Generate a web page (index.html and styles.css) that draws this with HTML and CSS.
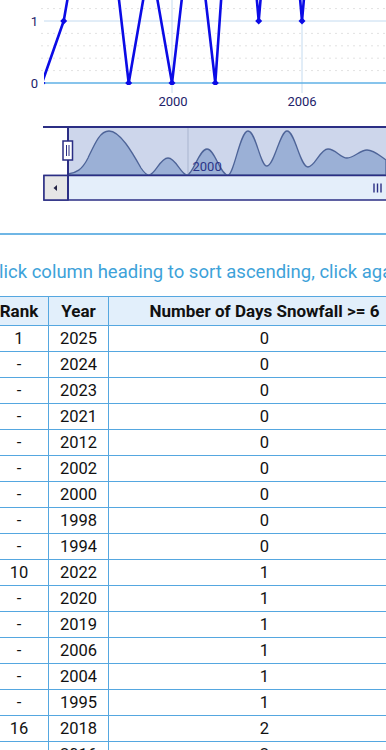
FILE: index.html
```html
<!DOCTYPE html>
<html>
<head>
<meta charset="utf-8">
<link rel="stylesheet" href="styles.css">
</head>
<body>
<svg class="chart" width="386" height="233" viewBox="0 0 386 233">
  <defs>
    <clipPath id="plot"><rect x="44" y="-300" width="342" height="385"/></clipPath>
  </defs>
  <g class="minor">
    <line x1="41" y1="8.6" x2="386" y2="8.6"/>
    <line x1="41" y1="33.4" x2="386" y2="33.4"/>
    <line x1="41" y1="45.8" x2="386" y2="45.8"/>
    <line x1="41" y1="58.2" x2="386" y2="58.2"/>
    <line x1="41" y1="70.6" x2="386" y2="70.6"/>
  </g>
  <line class="grid" x1="44" y1="21" x2="386" y2="21"/>
  <line class="grid" x1="172" y1="0" x2="172" y2="93"/>
  <line class="grid" x1="302" y1="0" x2="302" y2="93"/>
  <line class="base" x1="44" y1="83" x2="386" y2="83"/>
  <text class="lbl" x="38" y="25.5" text-anchor="end">1</text>
  <text class="lbl" x="38" y="87.5" text-anchor="end">0</text>
  <text class="lbl" x="173" y="106" text-anchor="middle">2000</text>
  <text class="lbl" x="302" y="106" text-anchor="middle">2006</text>
  <g clip-path="url(#plot)">
    <polyline class="series" points="42,83 63.7,21 85.3,-103 107,-103 128.7,83 150.3,-41 172,83 193.7,-103 215.3,83 237,-227 258.7,21 280.3,-227 302,21 323.7,-227 345.3,-103 367,-165 388.7,-103"/>
    <g class="mk">
      <path d="M42,79.5 L45.5,83 L42,86.5 L38.5,83 Z"/>
      <path d="M63.7,17.5 L67.2,21 L63.7,24.5 L60.2,21 Z"/>
      <path d="M128.7,79.5 L132.2,83 L128.7,86.5 L125.2,83 Z"/>
      <path d="M172,79.5 L175.5,83 L172,86.5 L168.5,83 Z"/>
      <path d="M215.3,79.5 L218.8,83 L215.3,86.5 L211.8,83 Z"/>
      <path d="M258.7,17.5 L262.2,21 L258.7,24.5 L255.2,21 Z"/>
      <path d="M302,17.5 L305.5,21 L302,24.5 L298.5,21 Z"/>
    </g>
  </g>
  <rect class="mask" x="69" y="128" width="317" height="47"/>
  <line class="navgrid" x1="188" y1="127" x2="188" y2="175"/>
  <path class="area" d="M68,174 C76,173 82,170 88,158 C95,143 100,131 109,131 C120,131 132,152 141,168 C145,174 147,175 149,175 C155,175 160,158 168,158 C176,158 181,175 187,175 C193,175 199,149 207,149 C215,149 220,175 228,175 C234,175 240,131 248,131 C256,131 260,166 267,166 C274,166 280,131 287,131 C295,131 300,167 308,167 C315,167 320,149 328,149 C336,149 340,158 347,158 C354,158 360,150 367,150 C374,150 380,156 386,160 L386,175 L68,175 Z"/>
  <text class="navlbl" x="192.5" y="171">2000</text>
  <line class="outline" x1="43" y1="127" x2="386" y2="127"/>
  <rect class="track" x="44" y="175.5" width="350" height="24.5"/>
  <rect class="btn" x="44" y="175.5" width="24" height="24.5"/>
  <path class="arrow" d="M53.5,188 L57,185 L57,191 Z"/>
  <g class="grip">
    <line x1="374" y1="183.5" x2="374" y2="192.5"/>
    <line x1="377.5" y1="183.5" x2="377.5" y2="192.5"/>
    <line x1="381" y1="183.5" x2="381" y2="192.5"/>
  </g>
  <line class="outline" x1="68" y1="127" x2="68" y2="200"/>
  <rect class="handle" x="63" y="141" width="9.5" height="19"/>
  <line class="hline" x1="66.5" y1="145" x2="66.5" y2="156"/>
  <line class="hline" x1="69" y1="145" x2="69" y2="156"/>
</svg>
<div class="divider"></div>
<div class="content">
  <p class="hint">Click column heading to sort ascending, click again to sort descending</p>
  <table class="rank-table">
    <thead>
      <tr><th class="c-rank">Rank</th><th class="c-year">Year</th><th class="c-num">Number of Days Snowfall &gt;= 6</th></tr>
    </thead>
    <tbody>
      <tr><td>1</td><td>2025</td><td>0</td></tr>
      <tr><td>-</td><td>2024</td><td>0</td></tr>
      <tr><td>-</td><td>2023</td><td>0</td></tr>
      <tr><td>-</td><td>2021</td><td>0</td></tr>
      <tr><td>-</td><td>2012</td><td>0</td></tr>
      <tr><td>-</td><td>2002</td><td>0</td></tr>
      <tr><td>-</td><td>2000</td><td>0</td></tr>
      <tr><td>-</td><td>1998</td><td>0</td></tr>
      <tr><td>-</td><td>1994</td><td>0</td></tr>
      <tr><td>10</td><td>2022</td><td>1</td></tr>
      <tr><td>-</td><td>2020</td><td>1</td></tr>
      <tr><td>-</td><td>2019</td><td>1</td></tr>
      <tr><td>-</td><td>2006</td><td>1</td></tr>
      <tr><td>-</td><td>2004</td><td>1</td></tr>
      <tr><td>-</td><td>1995</td><td>1</td></tr>
      <tr><td>16</td><td>2018</td><td>2</td></tr>
      <tr><td>-</td><td>2016</td><td>2</td></tr>
      <tr><td>-</td><td>2015</td><td>2</td></tr>
    </tbody>
  </table>
</div>
</body>
</html>
```
FILE: styles.css
```css
html, body {
  margin: 0;
  padding: 0;
  background: #ffffff;
  overflow: hidden;
  width: 386px;
  height: 750px;
}
body {
  font-family: Roboto, "Liberation Sans", sans-serif;
  color: #111111;
}
.chart {
  display: block;
}
.minor line {
  stroke: #e2e2e2;
  stroke-width: 1;
  stroke-dasharray: 2 4;
}
.grid {
  stroke: #c4dbf0;
  stroke-width: 1;
}
.base {
  stroke: #5fb0e6;
  stroke-width: 1.5;
}
.lbl {
  font-family: Roboto, "Liberation Sans", sans-serif;
  font-size: 13px;
  fill: #22226a;
}
.series {
  fill: none;
  stroke: #0b0be6;
  stroke-width: 2.6;
  stroke-linejoin: round;
}
.mk path {
  fill: #0b0be6;
}
.mask {
  fill: #cdd6eb;
}
.navgrid {
  stroke: #a9b5cf;
  stroke-width: 1;
}
.area {
  fill: #9bb0d6;
  stroke: #4e6498;
  stroke-width: 1.3;
}
.navlbl {
  font-family: Roboto, "Liberation Sans", sans-serif;
  font-size: 13px;
  fill: #2c3588;
}
.outline {
  stroke: #2b2e84;
  stroke-width: 2;
}
.track {
  fill: #e4eefa;
  stroke: #2b2e84;
  stroke-width: 1.5;
}
.btn {
  fill: #e6e6e6;
  stroke: #2b2e84;
  stroke-width: 1.5;
}
.arrow {
  fill: #222244;
}
.grip line {
  stroke: #2b2e84;
  stroke-width: 1.4;
}
.handle {
  fill: #ffffff;
  stroke: #2b2e84;
  stroke-width: 1.5;
}
.hline {
  stroke: #2b2e84;
  stroke-width: 1;
}
.divider {
  height: 0;
  border-top: 2px solid #6fb6e5;
}
.content {
  margin-left: -11px;
  width: 440px;
}
.hint {
  margin: 25px 0 12px -2px;
  font-size: 18.5px;
  line-height: 24px;
  color: #3da2d9;
  white-space: nowrap;
}
.rank-table {
  border-collapse: collapse;
  font-size: 16.5px;
  width: 428px;
  table-layout: fixed;
}
.rank-table th,
.rank-table td {
  border: 1.5px solid #55a7e0;
  text-align: center;
  padding: 0;
}
.rank-table th {
  background: #e2effb;
  font-weight: bold;
  height: 27.5px;
  font-size: 17px;
}
.rank-table td {
  height: 25.03px;
}
.c-rank { width: 58px; }
.c-year { width: 59px; }
.c-num { width: 311px; }
```
